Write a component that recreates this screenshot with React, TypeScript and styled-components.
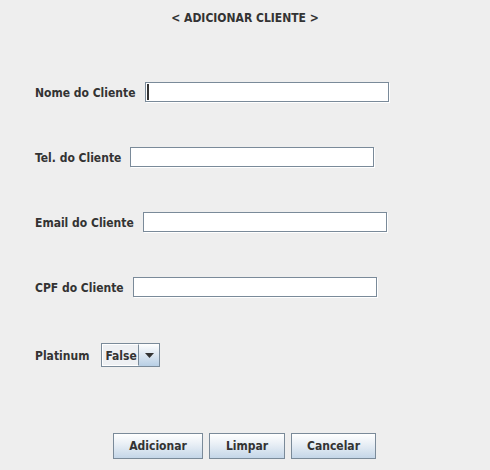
import styled, { createGlobalStyle } from "styled-components";

const GlobalStyle = createGlobalStyle`
  html, body {
    margin: 0;
    padding: 0;
    background: #eeeeee;
  }
  body {
    font-family: "DejaVu Sans Condensed", "DejaVu Sans", "Liberation Sans", sans-serif;
    font-stretch: semi-condensed;
  }
`;

const fields = [
  { label: "Nome do Cliente", focused: true },
  { label: "Tel. do Cliente", focused: false },
  { label: "Email do Cliente", focused: false },
  { label: "CPF do Cliente", focused: false },
];

const App = () => {
  return (
    <Frame>
      <GlobalStyle />
      <Title>&lt; ADICIONAR CLIENTE &gt;</Title>
      <Form>
        {fields.map((field) => (
          <Row key={field.label}>
            <Label>{field.label}</Label>
            <FieldBox>
              <TextField type="text" />
              {field.focused && <Caret />}
            </FieldBox>
          </Row>
        ))}
        <ComboRow>
          <Label>Platinum</Label>
          <Combo>
            <ComboValue>False</ComboValue>
            <ComboArrow>
              <svg width="9" height="5" viewBox="0 0 9 5">
                <path d="M0 0 H9 L4.5 5 Z" fill="#333" />
              </svg>
            </ComboArrow>
          </Combo>
        </ComboRow>
      </Form>
      <Buttons>
        <Button $width={90}>Adicionar</Button>
        <Button $width={76}>Limpar</Button>
        <Button $width={85}>Cancelar</Button>
      </Buttons>
    </Frame>
  );
};

const Frame = styled.div`
  width: 490px;
  height: 470px;
  box-sizing: border-box;
  display: flex;
  flex-direction: column;
  color: #333333;
  font-weight: bold;
  font-size: 12px;
`;

const Title = styled.div`
  margin-top: 10px;
  height: 16px;
  line-height: 16px;
  text-align: center;
  font-size: 12px;
`;

const Form = styled.div`
  margin-top: 56px;
  padding-left: 35px;
  display: flex;
  flex-direction: column;
  gap: 45px;
`;

const Row = styled.div`
  display: flex;
  align-items: center;
  height: 20px;
  gap: 9px;
`;

const Label = styled.span`
  white-space: nowrap;
  padding-top: 1px;
`;

const FieldBox = styled.div`
  position: relative;
  width: 244px;
  height: 20px;
`;

const TextField = styled.input`
  width: 100%;
  height: 100%;
  box-sizing: border-box;
  margin: 0;
  border: 1px solid #7a8a99;
  box-shadow: 1px 1px 0 #ffffff;
  background: #ffffff;
  outline: none;
  padding: 0 3px;
  font: inherit;
`;

const Caret = styled.span`
  position: absolute;
  left: 2px;
  top: 2px;
  width: 2px;
  height: 16px;
  background: #333333;
`;

const ComboRow = styled(Row)`
  height: 24px;
  gap: 12px;
  margin-top: 1px;
`;

const Combo = styled.div`
  display: flex;
  width: 59px;
  height: 24px;
  box-sizing: border-box;
  border: 1px solid #7a8a99;
`;

const ComboValue = styled.div`
  flex: 1;
  display: flex;
  align-items: center;
  padding-left: 2px;
  padding-top: 1px;
  background: #eef0f3;
  border: 1px solid #ffffff;
  border-right: 1px solid #7a8a99;
`;

const ComboArrow = styled.div`
  width: 20px;
  display: flex;
  align-items: center;
  justify-content: center;
  background: linear-gradient(#ffffff, #dbe6f1 50%, #b8cfe5);
`;

const Buttons = styled.div`
  margin-top: auto;
  margin-bottom: 11px;
  display: flex;
  justify-content: center;
  gap: 6px;
  padding-right: 1px;
`;

const Button = styled.button<{ $width: number }>`
  width: ${(p) => p.$width}px;
  height: 26px;
  margin: 0;
  padding: 0;
  border: 1px solid #7a8a99;
  border-radius: 0;
  background: linear-gradient(#ffffff, #eaf0f6 40%, #c4d6e8);
  color: #333333;
  font: inherit;
  font-weight: bold;
`;

export default App;
